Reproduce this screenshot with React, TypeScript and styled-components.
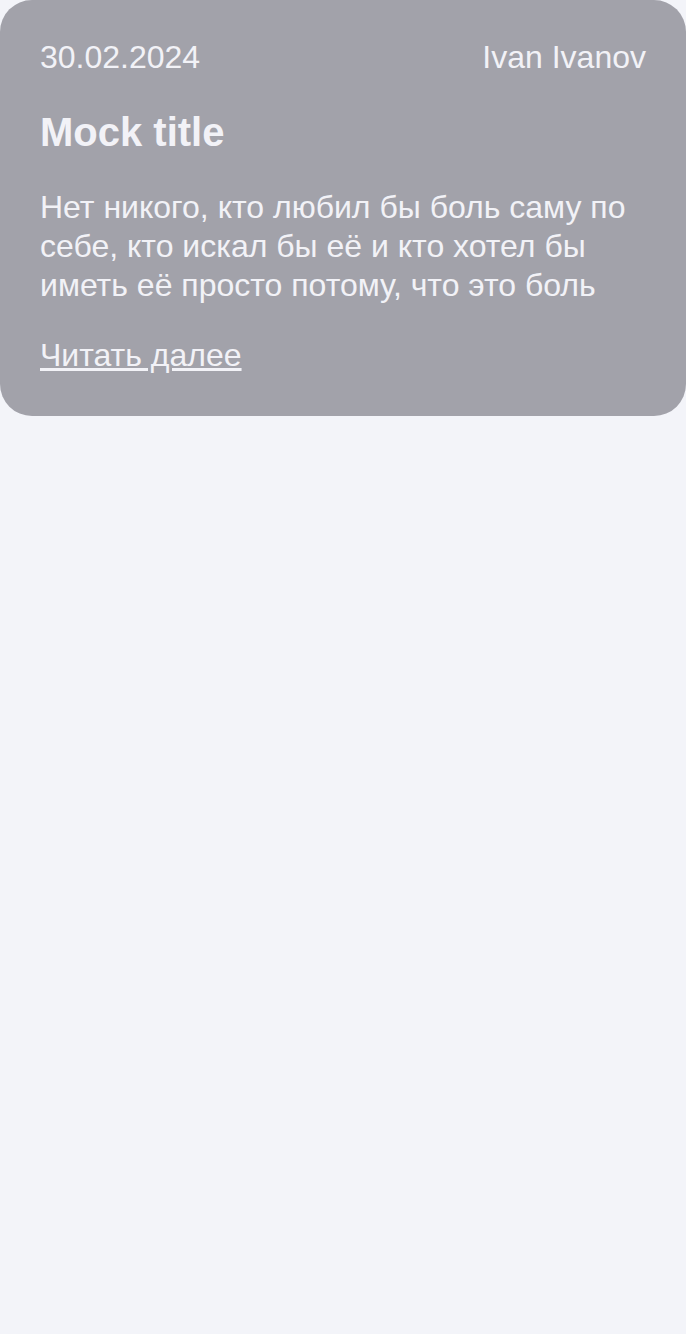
import React from "react";
import styled, { createGlobalStyle } from "styled-components";

const Global = createGlobalStyle`
  html, body { margin: 0; padding: 0; background: #f3f4f9; }
  body { font-family: "Liberation Sans", Arial, sans-serif; }
  * { box-sizing: border-box; }
`;

const Page = styled.div`
  min-height: 1334px;
  background: #f3f4f9;
`;

const Card = styled.article`
  background: #a2a2aa;
  border-radius: 32px;
  padding: 39px 40px 42px;
  color: #f2f2f7;
  display: flex;
  flex-direction: column;
`;

const Meta = styled.div`
  display: flex;
  justify-content: space-between;
  align-items: baseline;
  font-size: 32px;
  line-height: 37px;
`;

const Title = styled.h2`
  margin: 33px 0 0;
  font-size: 40px;
  line-height: 46px;
  font-weight: 700;
`;

const Body = styled.p`
  margin: 33px 0 0;
  font-size: 32px;
  line-height: 39px;
`;

const More = styled.a`
  margin-top: 32px;
  font-size: 32px;
  line-height: 37px;
  color: inherit;
  text-decoration: underline;
  align-self: flex-start;
`;

export default function App() {
  return (
    <Page>
      <Global />
      <Card>
        <Meta>
          <span>30.02.2024</span>
          <span>Ivan Ivanov</span>
        </Meta>
        <Title>Mock title</Title>
        <Body>
          Нет никого, кто любил бы боль саму по себе, кто искал бы её и кто хотел бы иметь её просто потому, что это боль
        </Body>
        <More href="#">Читать далее</More>
      </Card>
    </Page>
  );
}
